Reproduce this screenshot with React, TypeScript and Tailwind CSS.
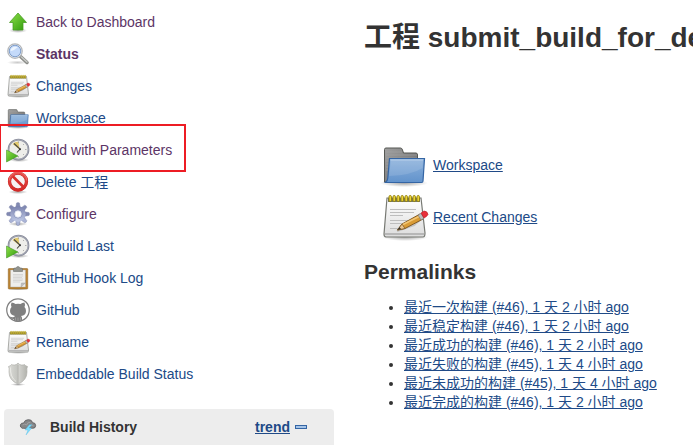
import type { ReactNode } from "react";

type IconProps = { className?: string };

function Svg({ className = "size-6", children }: { className?: string; children: ReactNode }) {
  return (
    <svg viewBox="0 0 48 48" className={`${className} shrink-0 overflow-visible`} aria-hidden="true">
      {children}
    </svg>
  );
}

/* Gradients shared by every icon on the page. */
function IconPaints() {
  return (
    <svg className="absolute size-0" aria-hidden="true">
      <defs>
        <linearGradient id="green" x1="0" y1="0" x2="1" y2="1">
          <stop offset="0" stopColor="#8fe04a" />
          <stop offset="1" stopColor="#2f9a0c" />
        </linearGradient>
        <linearGradient id="blue" x1="0" y1="0" x2="0" y2="1">
          <stop offset="0" stopColor="#8db2dc" />
          <stop offset="1" stopColor="#6293cc" />
        </linearGradient>
        <linearGradient id="grey" x1="0" y1="0" x2="1" y2="1">
          <stop offset="0" stopColor="#a0a0a0" />
          <stop offset="1" stopColor="#666666" />
        </linearGradient>
        <linearGradient id="paper" x1="0" y1="0" x2="0" y2="1">
          <stop offset="0" stopColor="#ffffff" />
          <stop offset="1" stopColor="#dcdcdc" />
        </linearGradient>
        <linearGradient id="gear" x1="0" y1="0" x2="0" y2="1">
          <stop offset="0" stopColor="#7a82ae" />
          <stop offset="1" stopColor="#c0cae6" />
        </linearGradient>
        <linearGradient id="red" x1="0" y1="0" x2="0" y2="1">
          <stop offset="0" stopColor="#e8504c" />
          <stop offset="1" stopColor="#d42a28" />
        </linearGradient>
        <linearGradient id="steel" x1="0" y1="0" x2="1" y2="0">
          <stop offset="0" stopColor="#dcdcd8" />
          <stop offset="0.45" stopColor="#c4c5c0" />
          <stop offset="0.55" stopColor="#d2d2ce" />
          <stop offset="1" stopColor="#b0b1ab" />
        </linearGradient>
        <radialGradient id="shade">
          <stop offset="0" stopColor="#000" stopOpacity="0.35" />
          <stop offset="1" stopColor="#000" stopOpacity="0" />
        </radialGradient>
      </defs>
    </svg>
  );
}

function UpIcon({ className }: IconProps) {
  return (
    <Svg className={className}>
      <ellipse cx="24" cy="41" rx="18" ry="5" fill="url(#shade)" />
      <path d="M24 6 41 25H34V40H14V25H7Z" fill="url(#green)" stroke="#469b20" strokeWidth="1.5" />
    </Svg>
  );
}

function SearchIcon({ className }: IconProps) {
  return (
    <Svg className={className}>
      <ellipse cx="23" cy="41" rx="21" ry="4" fill="url(#shade)" opacity="0.6" />
      <path d="M29 29 42 41" stroke="#8a8c88" strokeWidth="7" strokeLinecap="round" />
      <path d="M31 30 42 40" stroke="#c9cac7" strokeWidth="3" strokeLinecap="round" />
      <circle cx="18" cy="18" r="14.5" fill="#e8eef6" stroke="#b4b7ba" strokeWidth="2.500" />
      <circle cx="18" cy="18" r="11.5" fill="#c4dafa" stroke="#7f9ecb" strokeWidth="2" />
      <path d="M9 18c0-7 8-11 15-7-5 1-7 7-15 7Z" fill="#edf5ff" />
    </Svg>
  );
}

function NotepadIcon({ className }: IconProps) {
  return (
    <Svg className={className}>
      <ellipse cx="25" cy="44" rx="23" ry="4" fill="url(#shade)" />
      <path d="M7 5H41L45 40Q45 44 43 44H6Q4 44 4 41Z" fill="url(#paper)" stroke="#777973" strokeWidth="1.2" />
      <path d="M8 5H40V9H8Z" fill="#777760" />
      <path d="M5 41H44" stroke="#aaaaaa" strokeWidth="1.5" />
      {[10, 14, 18, 22, 26, 30, 34, 38].map((x) => (
        <rect key={x} x={x - 1} y="2.5" width="2.4" height="6" rx="1.2" fill="#f5dc3c" stroke="#8c7b08" strokeWidth="0.9" />
      ))}
      <path d="M10 16.5H36M10 19.5H34M10 22.5H23M10 27.5H28M10 30.5H27M10 35.5H18" stroke="#bdbdbd" strokeWidth="1.1" />
      <path d="M17 38 34 32 40 27" stroke="#aaaaaa" strokeWidth="2" fill="none" opacity="0.6" />
      <path d="M17.500 37 22 31 40 21 43 26 25 35.500Z" fill="#d99b35" stroke="#79501a" strokeWidth="0.9" />
      <path d="M22 32 41 22.500" stroke="#f3c774" strokeWidth="1.5" />
      <path d="M17.500 37 22 31 25 35.500Z" fill="#e9c591" stroke="#79501a" strokeWidth="0.7" />
      <path d="m17.500 37 2-3 1.500 2Z" fill="#333" />
      <path d="m38 22 3-1.700 3 5-3 1.700Z" fill="#bcbcbc" stroke="#777" strokeWidth="0.6" />
      <path d="m41 20 3-2q3.500 0 4 3.500-1 2-4 3.500Z" fill="#e8303a" stroke="#b81620" strokeWidth="0.6" />
    </Svg>
  );
}

function FolderIcon({ className }: IconProps) {
  return (
    <Svg className={className}>
      <ellipse cx="24" cy="42" rx="24" ry="4" fill="url(#shade)" />
      <path d="M4.500 41V8.500Q4.500 7 6 7H20.500Q22 7 22.500 9L23.500 12H36Q37.500 12 37.500 14V41Z" fill="url(#grey)" stroke="#555753" strokeWidth="1" />
      <path d="M6 11H22M6 14H37M6 17H37M6 20H10M6 23H9M6 26H9M6 29H8" stroke="#aaa" strokeWidth="0.8" opacity="0.6" />
      <path d="M9.500 17.500H44.500L43 40Q42.900 41.500 41.500 41.500H5.500Q7.600 40 7.800 37Z" fill="url(#blue)" stroke="#3465a4" strokeWidth="1.2" />
      <path d="M11 19H43L42.500 27Q32 34 9 35Z" fill="#fff" opacity="0.12" />
      <path d="M10.500 19H43" stroke="#b8d0ea" strokeWidth="1" />
    </Svg>
  );
}

function ClockIcon({ className }: IconProps) {
  return (
    <Svg className={className}>
      <ellipse cx="26" cy="44" rx="20" ry="4" fill="url(#shade)" />
      <circle cx="25" cy="23" r="20" fill="#eeeeea" stroke="#858896" strokeWidth="3.500" />
      <circle cx="25" cy="23" r="19.500" fill="none" stroke="#c0c2ce" strokeWidth="1.2" />
      <path d="M27 23 13 12Q17 7 25 7Z" fill="#e2c96c" />
      <path d="M25 7v3M41 23h-3M25 39v-3M36 12l-2 2M36 34l-2-2" stroke="#999" strokeWidth="1.5" />
      <path d="M16 11 28 22 22 29" fill="none" stroke="#4b4a42" strokeWidth="2.2" />
      <circle cx="28" cy="22.500" r="2" fill="#333" />
      <path d="M1 24 24 36 1 48Z" fill="url(#green)" stroke="#378d1a" strokeWidth="1" />
    </Svg>
  );
}

function ForbiddenIcon({ className }: IconProps) {
  return (
    <Svg className={className}>
      <ellipse cx="24" cy="44" rx="19" ry="4" fill="url(#shade)" />
      <circle cx="24" cy="23" r="17" fill="#f6f2f2" stroke="#c62420" strokeWidth="6.500" />
      <path d="M12 11 36 35" stroke="#d8302d" strokeWidth="5.500" />
      <circle cx="24" cy="23" r="17" fill="none" stroke="url(#red)" strokeWidth="5" />
      <path d="M6.500 21a17.500 17.500 0 0 1 35 0" fill="none" stroke="#f08984" strokeWidth="1.2" />
    </Svg>
  );
}

function GearIcon({ className }: IconProps) {
  return (
    <Svg className={className}>
      <ellipse cx="24" cy="44" rx="19" ry="4" fill="url(#shade)" />
      {[0, 45, 90, 135, 180, 225, 270, 315].map((angle) => (
        <path
          key={angle}
          d="M19.500 12 21 2Q24 0 27 2L28.500 12Z"
          fill={angle > 90 && angle < 270 ? "#a9b3d6" : "#8189b2"}
          stroke="#747ca2"
          strokeWidth="0.8"
          transform={`rotate(${angle} 24 24)`}
        />
      ))}
      <circle cx="24" cy="24" r="15.5" fill="url(#gear)" />
      <circle cx="24" cy="24" r="8" fill="none" stroke="#8791b8" strokeWidth="1.500" />
      <circle cx="24" cy="24" r="6.5" fill="#fff" stroke="#dde2ef" strokeWidth="1.500" />
    </Svg>
  );
}

function ClipboardIcon({ className }: IconProps) {
  return (
    <Svg className={className}>
      <ellipse cx="24" cy="46" rx="21" ry="3" fill="url(#shade)" />
      <rect x="4.500" y="5" width="39" height="41" rx="1.500" fill="#b98232" stroke="#8f6424" strokeWidth="1" />
      <path d="M9 8H39V42H9Z" fill="#eeeeec" stroke="#aaa" strokeWidth="0.8" />
      <path d="M14 17H34M14 20H34M14 23H32M14 26H34M14 29H33M14 32H28" stroke="#cfcfcf" strokeWidth="1.500" />
      <path d="M30 42 31 34H39Z" fill="#c0c0c0" stroke="#999" strokeWidth="0.8" />
      <path d="M15 11V6Q15 4 18 4H20Q21 1 24 1T28 4H30Q33 4 33 6V11Z" fill="#92948f" stroke="#60625e" />
    </Svg>
  );
}

function GithubIcon({ className }: IconProps) {
  return (
    <Svg className={className}>
      <circle cx="24" cy="24" r="22.5" fill="#fff" stroke="#808080" strokeWidth="2.500" />
      <path d="M11 9q5 0 8 3 5-1 10 0 3-3 8-3 2 5 0 9 3 3 3 8 0 9-10 10 2 2 2 4v6q-8 3-16 0v-4q-7 1-9-5 5 2 9 1l2-2Q8 34 8 26q0-5 3-8-2-4 0-9Z" fill="#808080" />
      <path d="M19 39v6M24 39v7M29 39v6" stroke="#b5b5b5" strokeWidth="1" />
    </Svg>
  );
}

function ShieldIcon({ className }: IconProps) {
  return (
    <Svg className={className}>
      <ellipse cx="24" cy="45" rx="15" ry="3" fill="url(#shade)" />
      <path
        d="M24 2Q27 6 31 6T37 5Q39 8 43 9 41 12 42 20 42 37 24 44 6 37 6 20 7 12 5 9 9 8 11 5 13 6 17 6T24 2Z"
        fill="url(#steel)"
        stroke="#a9aaa5"
        strokeWidth="1.200"
      />
      <path d="M24 7V41" stroke="#9a9b95" strokeWidth="2" strokeDasharray="2 2" />
      <path d="M9 11Q8 30 20 39" fill="none" stroke="#f1f1ee" strokeWidth="1.500" />
    </Svg>
  );
}

function StormIcon() {
  return (
    <Svg className="size-4">
      <path d="M7 28Q0 25 1 18 3 11 11 12 14 2 25 2 35 1 38 11 47 11 47 20 47 28 37 28H10Z" fill="#858688" stroke="#5a5c5e" strokeWidth="2.500" />
      <path d="M8 18q6-5 12 0 2-9 11-8M29 20q7-5 12 1" fill="none" stroke="#a5a6a8" strokeWidth="2.500" />
      <path d="M28 17 15 33h9l-6 15 17-21h-8l9-10Z" fill="#7adcfc" stroke="#4cb8e8" />
    </Svg>
  );
}

const tasks = [
  { label: "Back to Dashboard", Icon: UpIcon, visited: true },
  { label: "Status", Icon: SearchIcon, visited: true, current: true },
  { label: "Changes", Icon: NotepadIcon },
  { label: "Workspace", Icon: FolderIcon },
  { label: "Build with Parameters", Icon: ClockIcon, visited: true, marked: true },
  { label: "Delete 工程", Icon: ForbiddenIcon },
  { label: "Configure", Icon: GearIcon, visited: true },
  { label: "Rebuild Last", Icon: ClockIcon },
  { label: "GitHub Hook Log", Icon: ClipboardIcon },
  { label: "GitHub", Icon: GithubIcon },
  { label: "Rename", Icon: NotepadIcon },
  { label: "Embeddable Build Status", Icon: ShieldIcon },
];

const shortcuts = [
  { label: "Workspace", Icon: FolderIcon },
  { label: "Recent Changes", Icon: NotepadIcon },
];

const permalinks = [
  "最近一次构建 (#46), 1 天 2 小时 ago",
  "最近稳定构建 (#46), 1 天 2 小时 ago",
  "最近成功的构建 (#46), 1 天 2 小时 ago",
  "最近失败的构建 (#45), 1 天 4 小时 ago",
  "最近未成功的构建 (#45), 1 天 4 小时 ago",
  "最近完成的构建 (#46), 1 天 2 小时 ago",
];

export default function App() {
  return (
    <div className="flex overflow-hidden bg-white font-['Liberation_Sans','Noto_Sans_CJK_SC',sans-serif] text-sm text-[#333333]">
      <IconPaints />
      <aside className="w-[334px] shrink-0 pt-1.5 pl-1">
        <nav aria-label="Project">
          <ul>
            {tasks.map(({ label, Icon, visited, current, marked }) => (
              <li key={label} className="relative flex h-8 items-center pl-0.5">
                <a
                  href="#"
                  aria-current={current ? "page" : undefined}
                  className={`flex items-center gap-1.5 leading-5 ${visited ? "text-[#5c3566]" : "text-[#204a87]"} ${current ? "font-bold" : ""}`}
                >
                  <Icon />
                  {label}
                </a>
                {marked && (
                  <span className="pointer-events-none absolute -top-2.5 -left-[5px] z-10 h-12 w-[187px] border-2 border-[#ed1c24]" />
                )}
              </li>
            ))}
          </ul>
        </nav>
        <section className="mt-[19px] flex h-9 items-center rounded-t bg-[#ededed] pr-[27px] pl-4">
          <StormIcon />
          <h2 className="ml-3.5 grow font-bold">Build History</h2>
          <a href="#" className="font-bold text-[#204a87] underline">
            trend
          </a>
          <button type="button" aria-label="Collapse build history" className="ml-[5px] h-1 w-3 border border-[#3465a4] bg-[#a5c4e8]" />
        </section>
      </aside>

      <main className="min-w-0 grow overflow-hidden pt-5 pl-[30px]">
        <h1 className="text-[28px] leading-9 font-bold whitespace-nowrap">工程 submit_build_for_de</h1>
        <ul className="mt-[85px] flex flex-col gap-1 pl-4">
          {shortcuts.map(({ label, Icon }) => (
            <li key={label} className="flex h-12 items-center gap-[5px]">
              <Icon className="size-12" />
              <a href="#" className="text-[#204a87] underline">
                {label}
              </a>
            </li>
          ))}
        </ul>
        <h2 className="mt-[19px] text-[21px] leading-6 font-bold">Permalinks</h2>
        <ul className="mt-3.5 list-disc pl-10 leading-[19px]">
          {permalinks.map((text) => (
            <li key={text} className="h-[19px]">
              <a href="#" className="whitespace-nowrap text-[#204a87] underline">
                {text}
              </a>
            </li>
          ))}
        </ul>
      </main>
    </div>
  );
}
